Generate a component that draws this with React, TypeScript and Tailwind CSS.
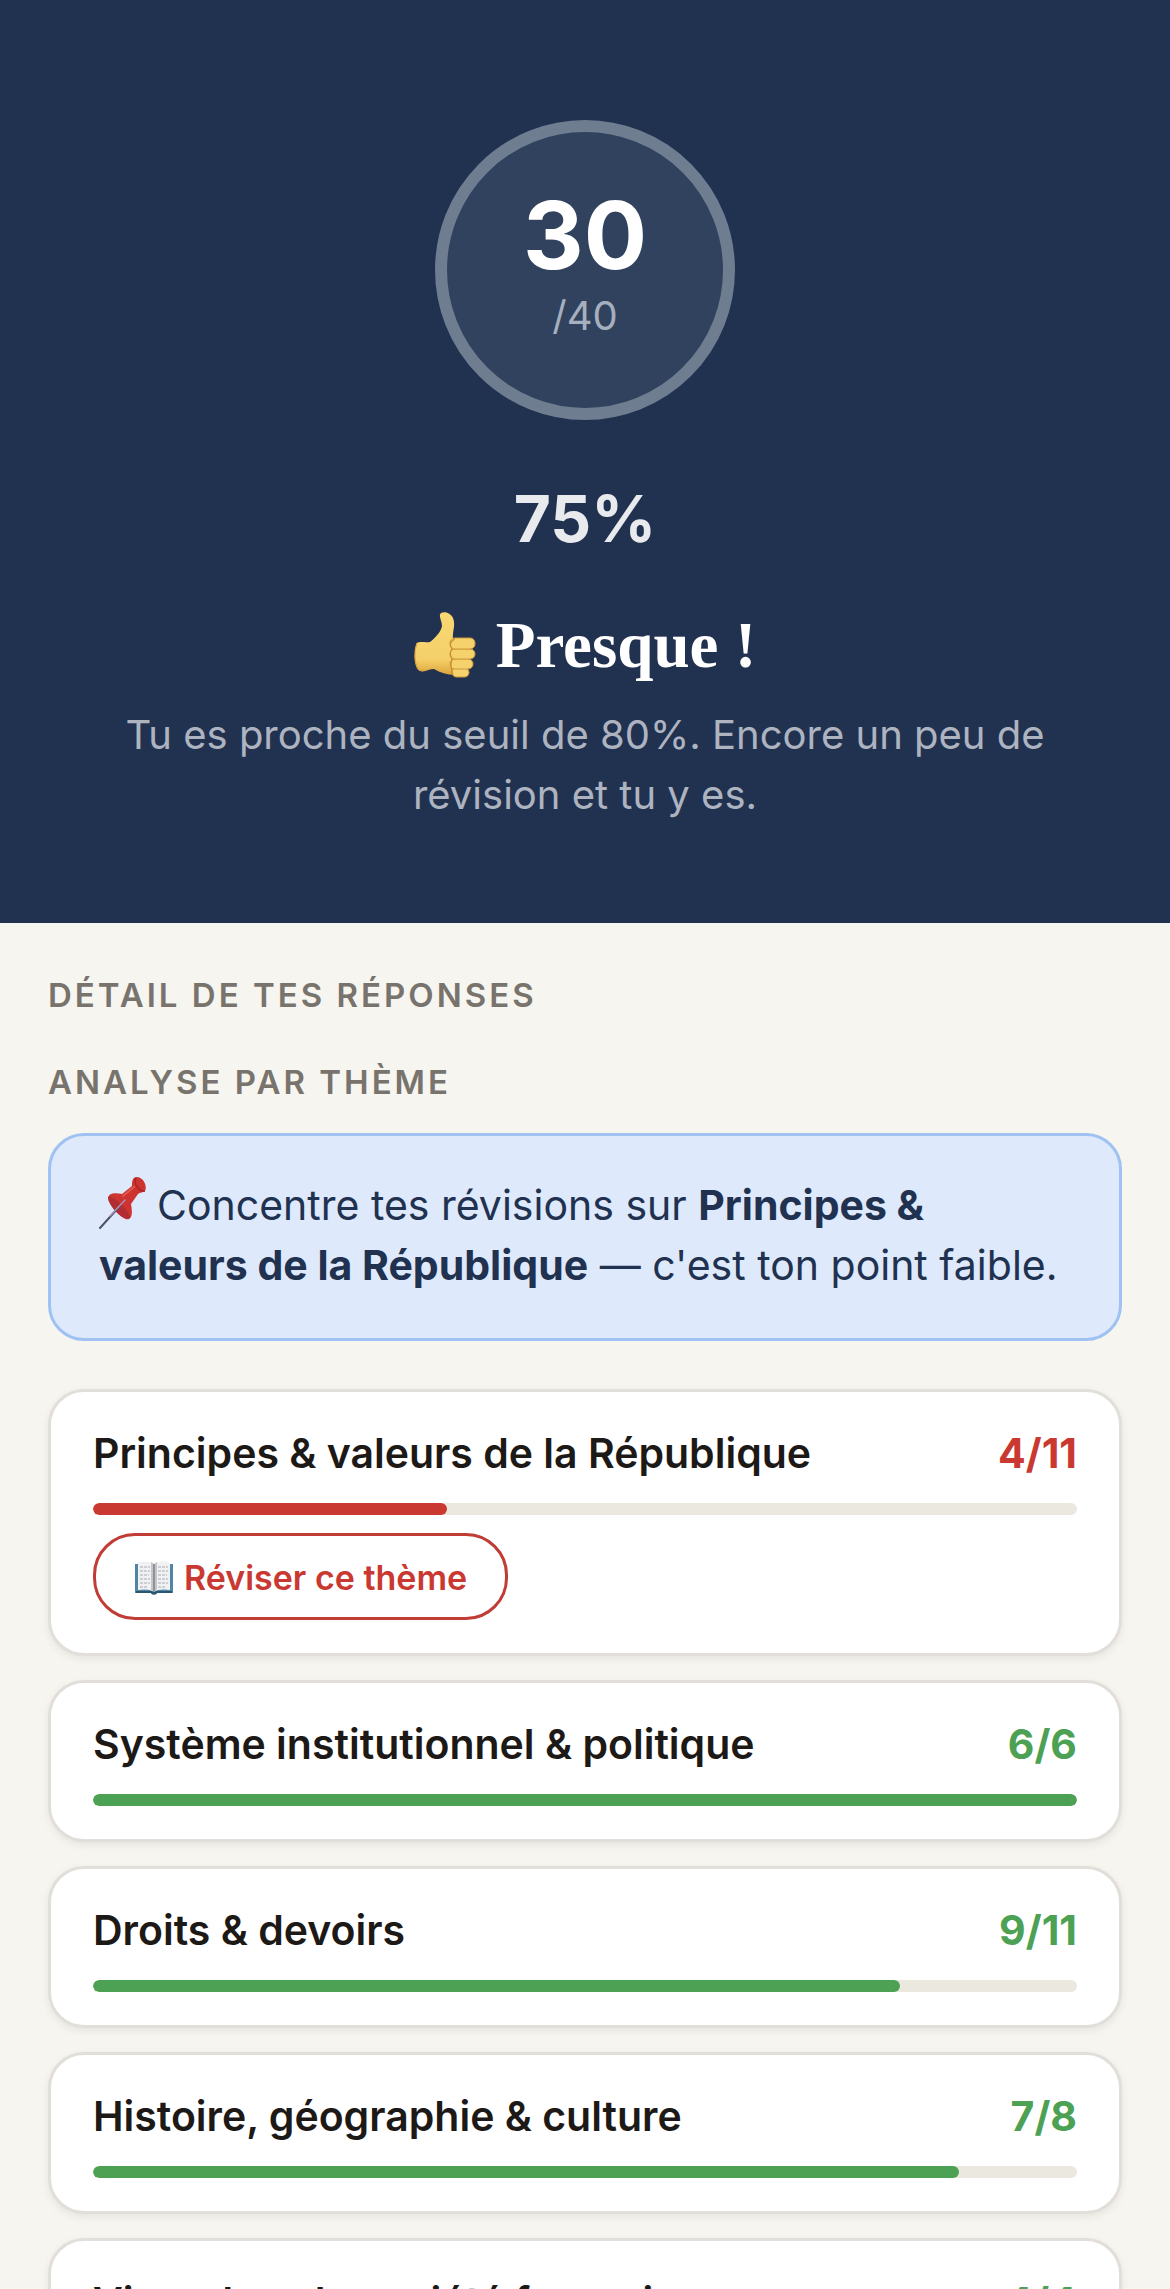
import React from 'react';

type Theme = {
  name: string;
  correct: number;
  total: number;
};

const THEMES: Theme[] = [
  { name: 'Principes & valeurs de la République', correct: 4, total: 11 },
  { name: 'Système institutionnel & politique', correct: 6, total: 6 },
  { name: 'Droits & devoirs', correct: 9, total: 11 },
  { name: 'Histoire, géographie & culture', correct: 7, total: 8 },
  { name: 'Vivre dans la société française', correct: 4, total: 4 },
];

const PASS_RATE = 80;

function ThumbIcon() {
  return (
    <svg viewBox="0 0 62 66" className="h-[66px] w-[62px] shrink-0" aria-hidden="true">
      <defs>
        <linearGradient id="skin" x1="0" y1="0" x2="0" y2="1">
          <stop offset="0" stopColor="#f8d873" />
          <stop offset="0.75" stopColor="#f5d06a" />
          <stop offset="1" stopColor="#dda43c" />
        </linearGradient>
      </defs>
      <path
        d="M3 31 C6 29 11 31 16 30 C21 26 27 20 28 14 C28 9 24 4 27 1 C32 -1 37 2 39 6 C42 13 38 20 39 27 L46 62 C39 64 28 62 20 57 C14 57 8 62 4 57 C0 50 0 37 3 31 Z"
        fill="url(#skin)"
      />
      <path d="M3 31 C0 39 0 50 4 57 C7 61 12 58 16 57" fill="none" stroke="#dba53f" strokeWidth="1.2" />
      <g fill="#f6d26c" stroke="#cf9a3c" strokeWidth="1">
        <rect x="38" y="56" width="17" height="9" rx="4.5" />
        <rect x="36" y="47" width="23" height="10" rx="5" />
        <rect x="36" y="37" width="25" height="10" rx="5" />
        <rect x="36" y="26" width="25" height="11" rx="5" />
      </g>
      <path d="M41 27 C36 29 35 33 38 37 C36 40 36 44 38 47 C36 52 37 57 39 63" fill="none" stroke="#c98c30" strokeWidth="1.2" />
    </svg>
  );
}

function PinIcon() {
  return (
    <svg viewBox="0 0 48 54" className="mr-2.5 inline-block h-[54px] w-12 align-[-10px]" aria-hidden="true">
      <path
        d="M37 1 C43 0 49 9 46 15 C44 17 41 16 39 18 L32 28 C33 34 34 41 30 43 C25 46 10 30 9 22 C10 16 18 17 23 18 L33 10 C33 6 33 2 37 1 Z"
        fill="#ce342f"
      />
      <path d="M9 21 C14 18 31 35 31 42 C25 46 9 30 9 21 Z" fill="#b12d32" />
      <path d="M37 2 C34 7 40 16 46 15" fill="none" stroke="#a82428" strokeWidth="1.5" />
      <path d="M24 20 L35 11" stroke="#e2574e" strokeWidth="2" strokeLinecap="round" />
      <path d="M20 31 L1 52" stroke="#4b5068" strokeWidth="2" strokeLinecap="round" />
      <path d="M26 24 L11 40" stroke="#a990b8" strokeWidth="1.5" strokeLinecap="round" />
    </svg>
  );
}

function BookIcon() {
  return (
    <svg viewBox="0 0 40 34" className="h-[34px] w-10 shrink-0" aria-hidden="true">
      <path d="M1 3 H39 V32 H23 C22 34 18 34 17 32 H1 Z" fill="#4f86a6" />
      <path d="M2 30 H38 V32 H23 C22 34 18 34 17 32 H2 Z" fill="#2b5670" />
      <path d="M4 2 C9 0 17 0 20 3 C23 0 31 0 36 2 V29 C31 28 23 28 20 31 C17 28 9 28 4 29 Z" fill="#f1f1f3" />
      <path d="M17 1 C19 2 20 3 20 4 C20 3 21 2 23 1 V29 L20 31 L17 29 Z" fill="#c3c5cb" />
      <path d="M20 3 V31" stroke="#6d7078" strokeWidth="1.2" />
      <path
        d="M6 6 H16 M6 10 H16 M6 14 H15 M6 18 H16 M6 22 H16 M6 26 H14 M24 6 H34 M24 10 H34 M24 14 H33 M24 18 H34 M24 22 H34 M24 26 H32"
        stroke="#a9abb2"
        strokeWidth="1"
        strokeDasharray="3 1"
      />
    </svg>
  );
}

function ThemeCard({ theme }: { theme: Theme }) {
  const percent = Math.round((theme.correct / theme.total) * 100);
  const passed = percent >= PASS_RATE;

  return (
    <li className="rounded-[36px] border-[3px] border-[#e2dfda] bg-white px-[42px] py-[33px] shadow-[0_3px_9px_rgba(0,0,0,0.07)]">
      <div className="flex items-center justify-between gap-6 text-[41px] leading-[56px]">
        <h3 className="font-semibold text-[#1c1917]">{theme.name}</h3>
        <span className={passed ? 'font-bold text-[#4ca154]' : 'font-bold text-[#c93932]'}>
          {theme.correct}/{theme.total}
        </span>
      </div>
      <div className="mt-[22px] h-3 overflow-hidden rounded-full bg-[#ebe9df]">
        <div
          className={passed ? 'h-full rounded-full bg-[#4ca154]' : 'h-full rounded-full bg-[#c93932]'}
          style={{ width: `${percent}%` }}
        />
      </div>
      {!passed && (
        <button
          type="button"
          className="mt-[18px] flex items-center gap-2.5 rounded-[42px] border-[3px] border-[#c13c35] px-[38px] pt-4 pb-3.5 text-[34px] leading-[51px] font-semibold text-[#c93932]"
        >
          <BookIcon />
          Réviser ce thème
        </button>
      )}
    </li>
  );
}

export default function App() {
  return (
    <main className="h-screen overflow-hidden bg-[#f6f5f0] font-['Inter',sans-serif]">
      <section className="flex flex-col items-center bg-[#213150] px-24 pt-[120px] pb-[98px] text-center">
        <div className="flex size-[300px] flex-col items-center justify-center rounded-full border-[12px] border-[#6f7d90] bg-[#31425f] pb-1">
          <span className="text-[94px] leading-[96px] font-bold text-white">30</span>
          <span className="text-[40px] leading-[66px] text-[#a5afbd]">/40</span>
        </div>
        <p className="mt-12 text-[64px] leading-[102px] font-bold text-[#e9eaee]">75%</p>
        <h1 className="mt-[27px] flex items-center gap-5 font-['Liberation_Serif',serif] text-[65px] leading-[96px] font-bold text-white">
          <ThumbIcon />
          Presque !
        </h1>
        <p className="mt-3 text-[40px] leading-[60px] text-[#adb4c0]">
          Tu es proche du seuil de 80%. Encore un peu de révision et tu y es.
        </p>
      </section>

      <section className="px-12 pt-[45px]">
        <h2 className="text-[33px] leading-[54px] font-semibold tracking-[3px] text-[#78736c] uppercase">
          Détail de tes réponses
        </h2>
        <h2 className="mt-[33px] text-[33px] leading-[54px] font-semibold tracking-[3px] text-[#78736c] uppercase">
          Analyse par thème
        </h2>
        <p className="mt-6 rounded-[36px] border-[3px] border-[#9fc2f2] bg-[#dee9fb] px-12 pt-[39px] pb-[43px] text-[41px] leading-[60px] text-[#213150]">
          <PinIcon />
          Concentre tes révisions sur <strong className="font-bold">Principes &amp; valeurs de la République</strong> — c'est
          ton point faible.
        </p>
        <ul className="mt-12 flex flex-col gap-6">
          {THEMES.map((theme) => (
            <ThemeCard key={theme.name} theme={theme} />
          ))}
        </ul>
      </section>
    </main>
  );
}
